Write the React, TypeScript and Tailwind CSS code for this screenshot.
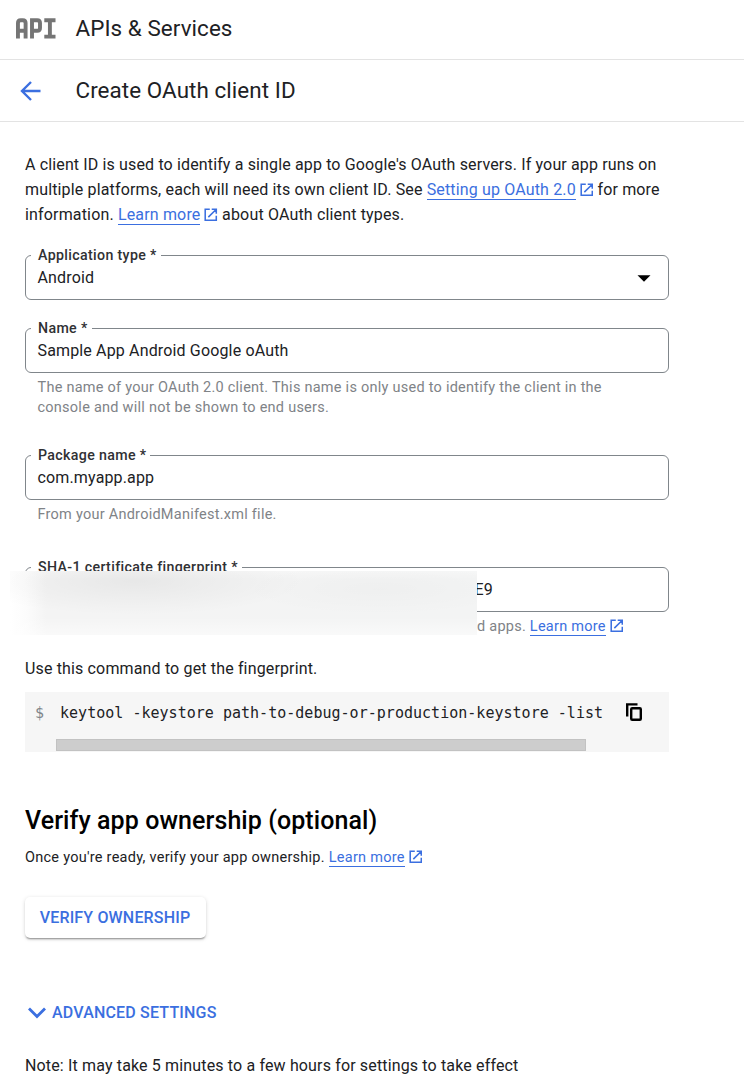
import type { ReactNode } from "react";

function ApiLogo() {
  return (
    <svg className="-mt-[2px]" width="40" height="21" viewBox="0 0 40 21" fill="none" stroke="#757575" strokeWidth="3.900" aria-label="API">
      <path d="M1.950 20.500V5Q1.950 2.200 4.700 2.200H6.800Q9.600 2.200 9.600 5V20.500M1.900 12.800H9.600" />
      <path d="M16 20.500V2.200H21.200Q24 2.200 24 5V10Q24 12.800 21.200 12.800H16" />
      <path d="M28.300 2.200H39.500M28.300 18.600H39.500M33.900 2.200V18.600" />
    </svg>
  );
}

function ExternalIcon() {
  return (
    <svg className="ml-1 inline-block align-[-1.500px]" width="13.500" height="13.500" viewBox="0 0 14 14" fill="none" stroke="#3b6fe0" strokeWidth="1.600">
      <path d="M6 1.250H1.250V12.750H12.750V8M8 1.250H12.750V6M12.500 1.500L4.500 9.500" />
    </svg>
  );
}

function Link({ children }: { children: ReactNode }) {
  return (
    <>
      <a className="border-b border-[#3b6fe0] text-[#3b6fe0]">{children}</a>
      <ExternalIcon />
    </>
  );
}

function Field({ label, children }: { label: string; children?: ReactNode }) {
  return (
    <fieldset className="h-[54px] w-[644px] min-w-0 rounded-[6px] border border-[#80868b]">
      <legend className="ml-[5px] h-[19px] pl-[7px] pr-[4px] text-[14.200px] leading-[18px] font-medium tracking-[0.350px] text-[#303134]">
        {label}
      </legend>
      <div className="flex h-[26px] items-center justify-between pr-[17px] pl-[11.500px] text-[16px] tracking-[0.15px]">
        {children}
      </div>
    </fieldset>
  );
}

export default function App() {
  return (
    <main className="h-[1080px] w-[744px] overflow-hidden bg-white font-[Roboto,sans-serif] text-[16px] text-[#202124]">
      <header className="flex h-[60px] items-center border-b border-[#e3e3e3] pl-4">
        <ApiLogo />
        <span className="-mt-px ml-[19.500px] text-[22.400px] tracking-[0.080px]">APIs &amp; Services</span>
      </header>
      <header className="flex h-[62px] items-center border-b border-[#e3e3e3] pl-5">
        <svg width="21" height="20" viewBox="0 0 21 20" fill="none" stroke="#3b6fe0" strokeWidth="2.400">
          <path d="M20.500 10H2M11 1L2 10L11 19" />
        </svg>
        <h1 className="mt-px ml-[34.500px] text-[22.400px] tracking-[0.080px]">Create OAuth client ID</h1>
      </header>

      <div className="pt-[30px] pl-[25px]">
        <div className="leading-[25px] whitespace-nowrap">
          <p className="tracking-[0.14px]">A client ID is used to identify a single app to Google's OAuth servers. If your app runs on</p>
          <p className="tracking-[0.15px]">multiple platforms, each will need its own client ID. See <Link>Setting up OAuth 2.0</Link> for more</p>
          <p className="tracking-[0.16px]">information. <Link>Learn more</Link> about OAuth client types.</p>
        </div>

        <div className="mt-[19px]">
          <Field label="Application type *">
            <span>Android</span>
            <svg width="14" height="7" viewBox="0 0 14 7"><path d="M0.500 0.300H13.500L7 6.800Z" fill="#000" /></svg>
          </Field>
        </div>

        <div className="mt-[19px]">
          <Field label="Name *">Sample App Android Google oAuth</Field>
          <p className="mt-[5px] pl-[12.500px] text-[14.500px] leading-5 tracking-[0.25px] whitespace-nowrap text-[#808387]">
            The name of your OAuth 2.0 client. This name is only used to identify the client in the<br />
            console and will not be shown to end users.
          </p>
        </div>

        <div className="mt-[28px]">
          <Field label="Package name *">com.myapp.app</Field>
          <p className="mt-[5px] pl-[12.500px] text-[14.500px] leading-5 tracking-[0.25px] text-[#808387]">From your AndroidManifest.xml file.</p>
        </div>

        <div className="relative mt-[33px]">
          <Field label="SHA-1 certificate fingerprint *">
            <span className="ml-[437px]">E9</span>
          </Field>
          <p className="mt-[5px] pl-[452px] text-[14.500px] leading-5 tracking-[0.25px] whitespace-nowrap text-[#808387]">d apps. <Link>Learn more</Link></p>
          <div className="absolute top-[13px] left-[-15px] h-[64px] w-[467px] overflow-hidden bg-white">
            <div className="h-full w-full bg-[linear-gradient(to_right,#fff_0,#fcfcfc_16px,#f4f4f4_36px,#f3f4f4_100%)]">
              <div className="h-full w-full bg-[radial-gradient(ellipse_170px_34px_at_125px_10px,rgba(0,0,0,.05),transparent),radial-gradient(ellipse_140px_26px_at_370px_18px,rgba(0,0,0,.02),transparent),linear-gradient(to_bottom,rgba(255,255,255,.3)_0,transparent_8px,transparent_46px,rgba(255,255,255,.5))]" />
            </div>
          </div>
        </div>

        <p className="mt-[19px] leading-[25px] tracking-[0.15px]">Use this command to get the fingerprint.</p>
        <div className="mt-[11px] h-[60px] w-[644px] bg-[#f6f6f6] pt-[8px]">
          <div className="flex h-[25px] items-center font-['DejaVu_Sans_Mono',monospace] text-[15px] tracking-[0.020px] whitespace-nowrap">
            <span className="w-[35px] pt-px pl-[10px] text-[#80868b]">$</span>
            <span className="pt-px">keytool -keystore path-to-debug-or-production-keystore -list</span>
            <svg className="ml-[23px]" width="17" height="19" viewBox="0 0 17 19" fill="none" stroke="#000" strokeWidth="2.400">
              <path d="M1.200 13.500V1.400H11.500" />
              <rect x="5.200" y="5.200" width="9.600" height="11.600" rx="1" />
            </svg>
          </div>
          <div className="mt-[14px] ml-[31px] h-[12px] w-[530px] border border-[#c2c2c2] bg-[#cdcdcd]" />
        </div>

        <h2 className="mt-[50px] text-[25px] leading-[38px] font-medium tracking-[0.080px] text-black">Verify app ownership (optional)</h2>
        <p className="mt-[8px] text-[14.500px] leading-[20px] tracking-[0.260px]">Once you're ready, verify your app ownership. <Link>Learn more</Link></p>
        <button className="mt-[29px] block h-[41px] w-[181px] rounded-[5px] bg-white pr-px text-[16px] font-medium tracking-[0.170px] text-[#3b6fe0] shadow-[0_2px_2px_-1px_rgba(0,0,0,.4),0_1px_4px_rgba(0,0,0,.14)]">
          VERIFY OWNERSHIP
        </button>
        <button className="mt-[62px] flex h-[26px] items-center text-[16px] font-medium tracking-[0.180px] text-[#3b6fe0]">
          <svg className="ml-[2.500px]" width="18" height="12" viewBox="0 0 18 12" fill="none" stroke="#3b6fe0" strokeWidth="2.800"><path d="M1 1.500L9 9.500L17 1.500" /></svg>
          <span className="ml-[6.500px]">ADVANCED SETTINGS</span>
        </button>
        <p className="mt-[27px] leading-[25px] tracking-[0.15px] whitespace-nowrap">Note: It may take 5 minutes to a few hours for settings to take effect</p>
      </div>
    </main>
  );
}
